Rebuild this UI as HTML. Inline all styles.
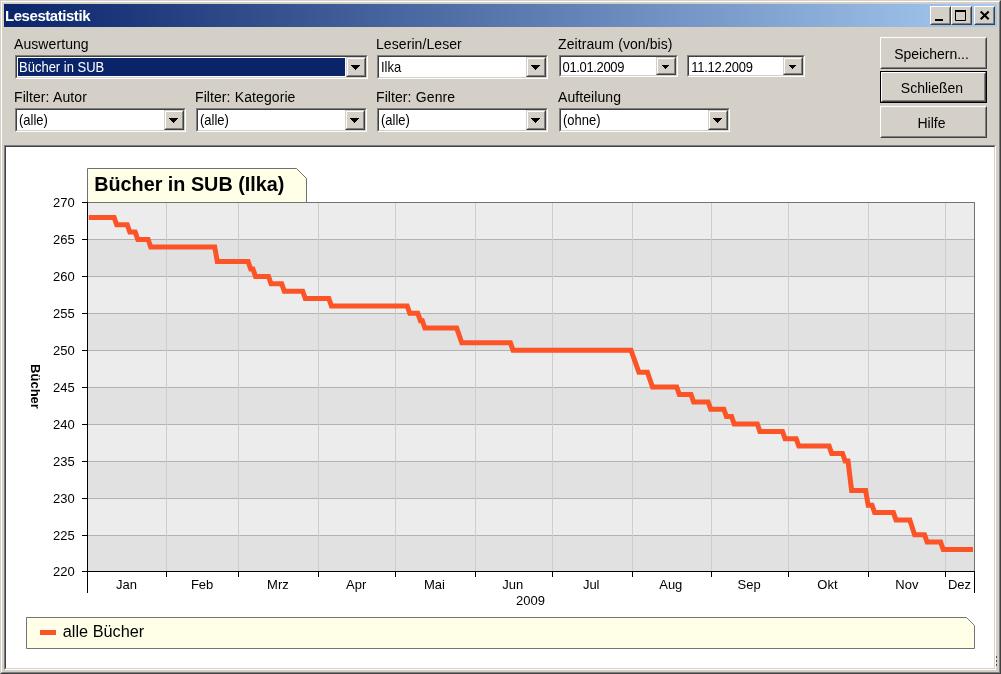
<!DOCTYPE html>
<html lang="de"><head><meta charset="utf-8"><title>Lesestatistik</title>
<style>
html,body{margin:0;padding:0}
body{width:1001px;height:674px;overflow:hidden;background:#d4d0c8;font-family:"Liberation Sans",Arial,sans-serif;position:relative;color:#000;will-change:transform}
.frame{position:absolute;left:0;top:0;width:1001px;height:674px;box-sizing:border-box;border:1px solid;border-color:#d4d0c8 #404040 #404040 #d4d0c8}
.frame2{position:absolute;left:1px;top:1px;width:999px;height:672px;box-sizing:border-box;border:1px solid;border-color:#fff #808080 #808080 #fff}
.title{position:absolute;left:4px;top:4px;width:993px;height:22.6px;background:linear-gradient(to right,#0a246a 0%,#a6caf0 100%)}
.title span{position:absolute;left:1px;top:2.6px;font-weight:bold;font-size:15px;letter-spacing:-0.45px;color:#fff;line-height:17px;white-space:nowrap}
.wb{position:absolute;top:2px;width:21px;height:18.5px;box-sizing:border-box;background:#d4d0c8;border:1px solid;border-color:#fff #404040 #404040 #fff}
.wb:before{content:"";position:absolute;left:0;top:0;right:0;bottom:0;border:1px solid;border-color:#d4d0c8 #808080 #808080 #d4d0c8}
.lbl{position:absolute;font-size:14px;word-spacing:0.3px;letter-spacing:0.08px;line-height:16px;white-space:nowrap}
.combo{position:absolute;box-sizing:border-box;border:1px solid;border-color:#808080 #fff #fff #808080;background:#fff}
.cin{box-sizing:border-box;width:100%;height:100%;border:1px solid;border-color:#404040 #d4d0c8 #d4d0c8 #404040;position:relative;background:#fff}
.ctext{position:absolute;left:1px;top:1px;font-size:13px;line-height:18px;padding-left:1px;box-sizing:border-box;white-space:nowrap;overflow:hidden}
.date .ctext{letter-spacing:-0.35px;padding-left:0.5px}
.d2 .ctext{padding-left:1.2px;letter-spacing:-0.25px}
.ctext span{display:inline-block;transform:scaleY(1.09);transform-origin:0 0;position:relative;top:0px}
.ctext.sel{background:#0a246a;color:#fff}
.cbtn{position:absolute;right:0;top:0;box-sizing:border-box;background:#d4d0c8;border:1px solid;border-color:#d4d0c8 #404040 #404040 #d4d0c8}
.cbtn:before{content:"";position:absolute;left:0;top:0;right:0;bottom:0;border:1px solid;border-color:#fff #808080 #808080 #fff}
.cbtn svg{position:absolute;left:-1px;top:-1px}
.btn{position:absolute;left:880px;width:107px;height:32px;box-sizing:border-box;background:#d4d0c8;border:1px solid;border-color:#fff #404040 #404040 #fff;font-size:14px;text-align:center;line-height:33px;text-indent:-4px}
.btn:before{content:"";position:absolute;left:0;top:0;right:0;bottom:0;border:1px solid;border-color:#d4d0c8 #808080 #808080 #d4d0c8}
.btn.def{outline:1px solid #000;outline-offset:0;left:881px;width:105px;height:30px;line-height:31px;text-indent:-3px}
.panel{position:absolute;left:4px;top:145px;width:992px;height:525px;box-sizing:border-box;border:1px solid;border-color:#808080 #fff #fff #808080;background:#fff}
.panel .pin{width:100%;height:100%;box-sizing:border-box;border:1px solid;border-color:#404040 #d4d0c8 #d4d0c8 #404040;background:#fff}
.chart{position:absolute;left:6px;top:147px}
.grip{position:absolute;left:996px;width:1px;height:2.4px;background:#505050}
</style></head><body>
<div class="frame"></div><div class="frame2"></div>
<div class="title"><span>Lesestatistik</span>
<div class="wb" style="left:926px"><svg width="19" height="17" style="position:absolute;left:0;top:0"><rect x="4" y="12" width="8" height="2" fill="#000"/></svg></div>
<div class="wb" style="left:947px"><svg width="19" height="17" style="position:absolute;left:0;top:0"><path d="M3.5,4 h10 v9.5 h-10 z" fill="none" stroke="#000" stroke-width="1"/><rect x="3" y="3" width="11" height="2" fill="#000"/></svg></div>
<div class="wb" style="left:970px"><svg width="19" height="17" style="position:absolute;left:0;top:0"><path d="M5.7,4.6 L13.7,12.3 M13.7,4.6 L5.7,12.3" stroke="#000" stroke-width="2.1" fill="none" stroke-linecap="butt"/></svg></div>
</div>
<div class="lbl" style="left:14px;top:36px">Auswertung</div><div class="lbl" style="left:376px;top:36px">Leserin/Leser</div><div class="lbl" style="left:558px;top:36px">Zeitraum (von/bis)</div><div class="lbl" style="left:14px;top:89px">Filter: Autor</div><div class="lbl" style="left:195px;top:89px">Filter: Kategorie</div><div class="lbl" style="left:376px;top:89px">Filter: Genre</div><div class="lbl" style="left:558px;top:89px">Aufteilung</div><div class="combo " style="left:15px;top:55px;width:353px;height:24px"><div class="cin"><div class="ctext sel" style="width:327px;height:18px"><span>Bücher in SUB</span></div><div class="cbtn" style="width:20px;height:20px"><svg width="20" height="20" shape-rendering="crispEdges"><path d="M5,8h9v1h-1v1h-1v1h-1v1h-1v1h-1v-1h-1v-1h-1v-1h-1v-1h-1z" fill="#000"/></svg></div></div></div><div class="combo " style="left:377px;top:55px;width:171px;height:24px"><div class="cin"><div class="ctext" style="width:145px;height:18px"><span>Ilka</span></div><div class="cbtn" style="width:20px;height:20px"><svg width="20" height="20" shape-rendering="crispEdges"><path d="M5,8h9v1h-1v1h-1v1h-1v1h-1v1h-1v-1h-1v-1h-1v-1h-1v-1h-1z" fill="#000"/></svg></div></div></div><div class="combo date" style="left:559px;top:55px;width:119px;height:22px"><div class="cin"><div class="ctext" style="width:93px;height:16px"><span>01.01.2009</span></div><div class="cbtn" style="width:20px;height:18px"><svg width="20" height="18" shape-rendering="crispEdges"><path d="M6,8h7v1h-1v1h-1v1h-1v1h-1v-1h-1v-1h-1v-1h-1z" fill="#000"/></svg></div></div></div><div class="combo date d2" style="left:687px;top:55px;width:118px;height:22px"><div class="cin"><div class="ctext" style="width:92px;height:16px"><span>11.12.2009</span></div><div class="cbtn" style="width:20px;height:18px"><svg width="20" height="18" shape-rendering="crispEdges"><path d="M6,8h7v1h-1v1h-1v1h-1v1h-1v-1h-1v-1h-1v-1h-1z" fill="#000"/></svg></div></div></div><div class="combo " style="left:15px;top:108px;width:171px;height:24px"><div class="cin"><div class="ctext" style="width:145px;height:18px"><span>(alle)</span></div><div class="cbtn" style="width:20px;height:20px"><svg width="20" height="20" shape-rendering="crispEdges"><path d="M5,8h9v1h-1v1h-1v1h-1v1h-1v1h-1v-1h-1v-1h-1v-1h-1v-1h-1z" fill="#000"/></svg></div></div></div><div class="combo " style="left:196px;top:108px;width:171px;height:24px"><div class="cin"><div class="ctext" style="width:145px;height:18px"><span>(alle)</span></div><div class="cbtn" style="width:20px;height:20px"><svg width="20" height="20" shape-rendering="crispEdges"><path d="M5,8h9v1h-1v1h-1v1h-1v1h-1v1h-1v-1h-1v-1h-1v-1h-1v-1h-1z" fill="#000"/></svg></div></div></div><div class="combo " style="left:377px;top:108px;width:171px;height:24px"><div class="cin"><div class="ctext" style="width:145px;height:18px"><span>(alle)</span></div><div class="cbtn" style="width:20px;height:20px"><svg width="20" height="20" shape-rendering="crispEdges"><path d="M5,8h9v1h-1v1h-1v1h-1v1h-1v1h-1v-1h-1v-1h-1v-1h-1v-1h-1z" fill="#000"/></svg></div></div></div><div class="combo " style="left:559px;top:108px;width:171px;height:24px"><div class="cin"><div class="ctext" style="width:145px;height:18px"><span>(ohne)</span></div><div class="cbtn" style="width:20px;height:20px"><svg width="20" height="20" shape-rendering="crispEdges"><path d="M5,8h9v1h-1v1h-1v1h-1v1h-1v1h-1v-1h-1v-1h-1v-1h-1v-1h-1z" fill="#000"/></svg></div></div></div><div class="btn" style="top:37px">Speichern...</div><div class="btn def" style="top:72px">Schließen</div><div class="btn" style="top:106px">Hilfe</div>
<div class="panel"><div class="pin"></div></div>
<svg class="chart" width="988" height="521" viewBox="6 147 988 521" font-family="Liberation Sans, Arial, sans-serif">
<rect x="88" y="202" width="887" height="37" fill="#ececec"/>
<rect x="88" y="239" width="887" height="37" fill="#e1e1e1"/>
<rect x="88" y="276" width="887" height="37" fill="#ececec"/>
<rect x="88" y="313" width="887" height="37" fill="#e1e1e1"/>
<rect x="88" y="350" width="887" height="37" fill="#ececec"/>
<rect x="88" y="387" width="887" height="37" fill="#e1e1e1"/>
<rect x="88" y="424" width="887" height="37" fill="#ececec"/>
<rect x="88" y="461" width="887" height="37" fill="#e1e1e1"/>
<rect x="88" y="498" width="887" height="37" fill="#ececec"/>
<rect x="88" y="535" width="887" height="36" fill="#e1e1e1"/>
<line x1="88" x2="974.5" y1="202.5" y2="202.5" stroke="#b2b2b2" stroke-width="1"/>
<line x1="88" x2="974.5" y1="239.5" y2="239.5" stroke="#b2b2b2" stroke-width="1"/>
<line x1="88" x2="974.5" y1="276.5" y2="276.5" stroke="#b2b2b2" stroke-width="1"/>
<line x1="88" x2="974.5" y1="313.5" y2="313.5" stroke="#b2b2b2" stroke-width="1"/>
<line x1="88" x2="974.5" y1="350.5" y2="350.5" stroke="#b2b2b2" stroke-width="1"/>
<line x1="88" x2="974.5" y1="387.5" y2="387.5" stroke="#b2b2b2" stroke-width="1"/>
<line x1="88" x2="974.5" y1="424.5" y2="424.5" stroke="#b2b2b2" stroke-width="1"/>
<line x1="88" x2="974.5" y1="461.5" y2="461.5" stroke="#b2b2b2" stroke-width="1"/>
<line x1="88" x2="974.5" y1="498.5" y2="498.5" stroke="#b2b2b2" stroke-width="1"/>
<line x1="88" x2="974.5" y1="535.5" y2="535.5" stroke="#b2b2b2" stroke-width="1"/>
<line x1="166.5" x2="166.5" y1="202" y2="571" stroke="#cdcdcd" stroke-width="1"/>
<line x1="238.5" x2="238.5" y1="202" y2="571" stroke="#cdcdcd" stroke-width="1"/>
<line x1="318.5" x2="318.5" y1="202" y2="571" stroke="#cdcdcd" stroke-width="1"/>
<line x1="395.5" x2="395.5" y1="202" y2="571" stroke="#cdcdcd" stroke-width="1"/>
<line x1="475.5" x2="475.5" y1="202" y2="571" stroke="#cdcdcd" stroke-width="1"/>
<line x1="552.5" x2="552.5" y1="202" y2="571" stroke="#cdcdcd" stroke-width="1"/>
<line x1="632.5" x2="632.5" y1="202" y2="571" stroke="#cdcdcd" stroke-width="1"/>
<line x1="711.5" x2="711.5" y1="202" y2="571" stroke="#cdcdcd" stroke-width="1"/>
<line x1="788.5" x2="788.5" y1="202" y2="571" stroke="#cdcdcd" stroke-width="1"/>
<line x1="868.5" x2="868.5" y1="202" y2="571" stroke="#cdcdcd" stroke-width="1"/>
<line x1="945.5" x2="945.5" y1="202" y2="571" stroke="#cdcdcd" stroke-width="1"/>
<path d="M87.5,202.5 L87.5,168.5 L296.5,168.5 L306.5,178.5 L306.5,202.5" fill="#ffffe8" stroke="#707070" stroke-width="1"/>
<path d="M88,202.5 L974.5,202.5 L974.5,571" fill="none" stroke="#727272" stroke-width="1"/>
<text x="94.2" y="190.6" font-size="19.8" font-weight="bold" fill="#000">Bücher in SUB (Ilka)</text>
<polyline points="88.8,217.4 114.1,217.4 116.7,224.7 127.2,224.7 129.8,232.1 135.2,232.1 137.8,239.5 148.1,239.5 150.7,246.9 214.7,246.9 217.3,261.6 248.1,261.6 250.7,269.0 252.9,269.0 255.5,276.4 268.5,276.4 271.1,283.8 281.7,283.8 284.3,291.2 302.7,291.2 305.3,298.5 328.8,298.5 331.4,305.9 407.2,305.9 409.8,313.3 417.8,313.3 420.4,320.7 422.3,320.7 424.9,328.1 456.7,328.1 461.8,342.8 510.4,342.8 513.0,350.2 631.0,350.2 638.9,372.3 647.4,372.3 652.5,387.1 676.7,387.1 679.3,394.5 691.0,394.5 693.6,401.9 708.1,401.9 710.7,409.2 723.8,409.2 726.4,416.6 731.6,416.6 734.2,424.0 757.3,424.0 759.9,431.4 782.5,431.4 785.1,438.8 796.2,438.8 798.8,446.1 829.1,446.1 831.7,453.5 842.5,453.5 845.1,460.9 848.0,460.9 851.6,490.4 865.6,490.4 868.2,505.2 872.0,505.2 874.6,512.6 893.4,512.6 896.0,519.9 909.8,519.9 914.6,534.7 924.5,534.7 927.1,542.1 940.6,542.1 943.2,549.5 973.0,549.5" fill="none" stroke="#fc5327" stroke-width="5" stroke-linejoin="miter" stroke-linecap="butt"/>
<line x1="87.5" x2="87.5" y1="202" y2="593" stroke="#000" stroke-width="1"/>
<line x1="82" x2="974.5" y1="571.5" y2="571.5" stroke="#000" stroke-width="1"/>
<line x1="974.5" x2="974.5" y1="571" y2="593" stroke="#000" stroke-width="1"/>
<line x1="82" x2="88" y1="202.5" y2="202.5" stroke="#000" stroke-width="1"/>
<line x1="82" x2="88" y1="239.5" y2="239.5" stroke="#000" stroke-width="1"/>
<line x1="82" x2="88" y1="276.5" y2="276.5" stroke="#000" stroke-width="1"/>
<line x1="82" x2="88" y1="313.5" y2="313.5" stroke="#000" stroke-width="1"/>
<line x1="82" x2="88" y1="350.5" y2="350.5" stroke="#000" stroke-width="1"/>
<line x1="82" x2="88" y1="387.5" y2="387.5" stroke="#000" stroke-width="1"/>
<line x1="82" x2="88" y1="424.5" y2="424.5" stroke="#000" stroke-width="1"/>
<line x1="82" x2="88" y1="461.5" y2="461.5" stroke="#000" stroke-width="1"/>
<line x1="82" x2="88" y1="498.5" y2="498.5" stroke="#000" stroke-width="1"/>
<line x1="82" x2="88" y1="535.5" y2="535.5" stroke="#000" stroke-width="1"/>
<line x1="166.5" x2="166.5" y1="571" y2="577" stroke="#000" stroke-width="1"/>
<line x1="238.5" x2="238.5" y1="571" y2="577" stroke="#000" stroke-width="1"/>
<line x1="318.5" x2="318.5" y1="571" y2="577" stroke="#000" stroke-width="1"/>
<line x1="395.5" x2="395.5" y1="571" y2="577" stroke="#000" stroke-width="1"/>
<line x1="475.5" x2="475.5" y1="571" y2="577" stroke="#000" stroke-width="1"/>
<line x1="552.5" x2="552.5" y1="571" y2="577" stroke="#000" stroke-width="1"/>
<line x1="632.5" x2="632.5" y1="571" y2="577" stroke="#000" stroke-width="1"/>
<line x1="711.5" x2="711.5" y1="571" y2="577" stroke="#000" stroke-width="1"/>
<line x1="788.5" x2="788.5" y1="571" y2="577" stroke="#000" stroke-width="1"/>
<line x1="868.5" x2="868.5" y1="571" y2="577" stroke="#000" stroke-width="1"/>
<line x1="945.5" x2="945.5" y1="571" y2="577" stroke="#000" stroke-width="1"/>
<text x="74.8" y="206.8" font-size="13" text-anchor="end" fill="#000">270</text>
<text x="74.8" y="243.8" font-size="13" text-anchor="end" fill="#000">265</text>
<text x="74.8" y="280.9" font-size="13" text-anchor="end" fill="#000">260</text>
<text x="74.8" y="317.9" font-size="13" text-anchor="end" fill="#000">255</text>
<text x="74.8" y="354.9" font-size="13" text-anchor="end" fill="#000">250</text>
<text x="74.8" y="391.9" font-size="13" text-anchor="end" fill="#000">245</text>
<text x="74.8" y="428.9" font-size="13" text-anchor="end" fill="#000">240</text>
<text x="74.8" y="465.9" font-size="13" text-anchor="end" fill="#000">235</text>
<text x="74.8" y="502.9" font-size="13" text-anchor="end" fill="#000">230</text>
<text x="74.8" y="539.9" font-size="13" text-anchor="end" fill="#000">225</text>
<text x="74.8" y="575.9" font-size="13" text-anchor="end" fill="#000">220</text>
<text x="126.4" y="589" font-size="13" text-anchor="middle" fill="#000">Jan</text>
<text x="202.1" y="589" font-size="13" text-anchor="middle" fill="#000">Feb</text>
<text x="277.9" y="589" font-size="13" text-anchor="middle" fill="#000">Mrz</text>
<text x="356.2" y="589" font-size="13" text-anchor="middle" fill="#000">Apr</text>
<text x="434.5" y="589" font-size="13" text-anchor="middle" fill="#000">Mai</text>
<text x="512.8" y="589" font-size="13" text-anchor="middle" fill="#000">Jun</text>
<text x="591.2" y="589" font-size="13" text-anchor="middle" fill="#000">Jul</text>
<text x="670.8" y="589" font-size="13" text-anchor="middle" fill="#000">Aug</text>
<text x="749.1" y="589" font-size="13" text-anchor="middle" fill="#000">Sep</text>
<text x="827.4" y="589" font-size="13" text-anchor="middle" fill="#000">Okt</text>
<text x="906.9" y="589" font-size="13" text-anchor="middle" fill="#000">Nov</text>
<text x="959.5" y="589" font-size="13" text-anchor="middle" fill="#000">Dez</text>
<text x="530.5" y="605" font-size="13" text-anchor="middle" fill="#000">2009</text>
<text transform="translate(30.5,386.5) rotate(90)" font-size="13" font-weight="bold" text-anchor="middle" fill="#000">Bücher</text>
<path d="M26.5,617.5 L966.5,617.5 L974.5,625.5 L974.5,648.5 L26.5,648.5 Z" fill="#ffffe8" stroke="#747474" stroke-width="1"/>
<rect x="40" y="630" width="16" height="5" fill="#fc5327"/>
<text x="62.8" y="636.8" font-size="16.3" fill="#000">alle Bücher</text>
</svg><div class="grip" style="top:655.6px"></div><div class="grip" style="top:659.6px"></div><div class="grip" style="top:663.6px"></div>
</body></html>
